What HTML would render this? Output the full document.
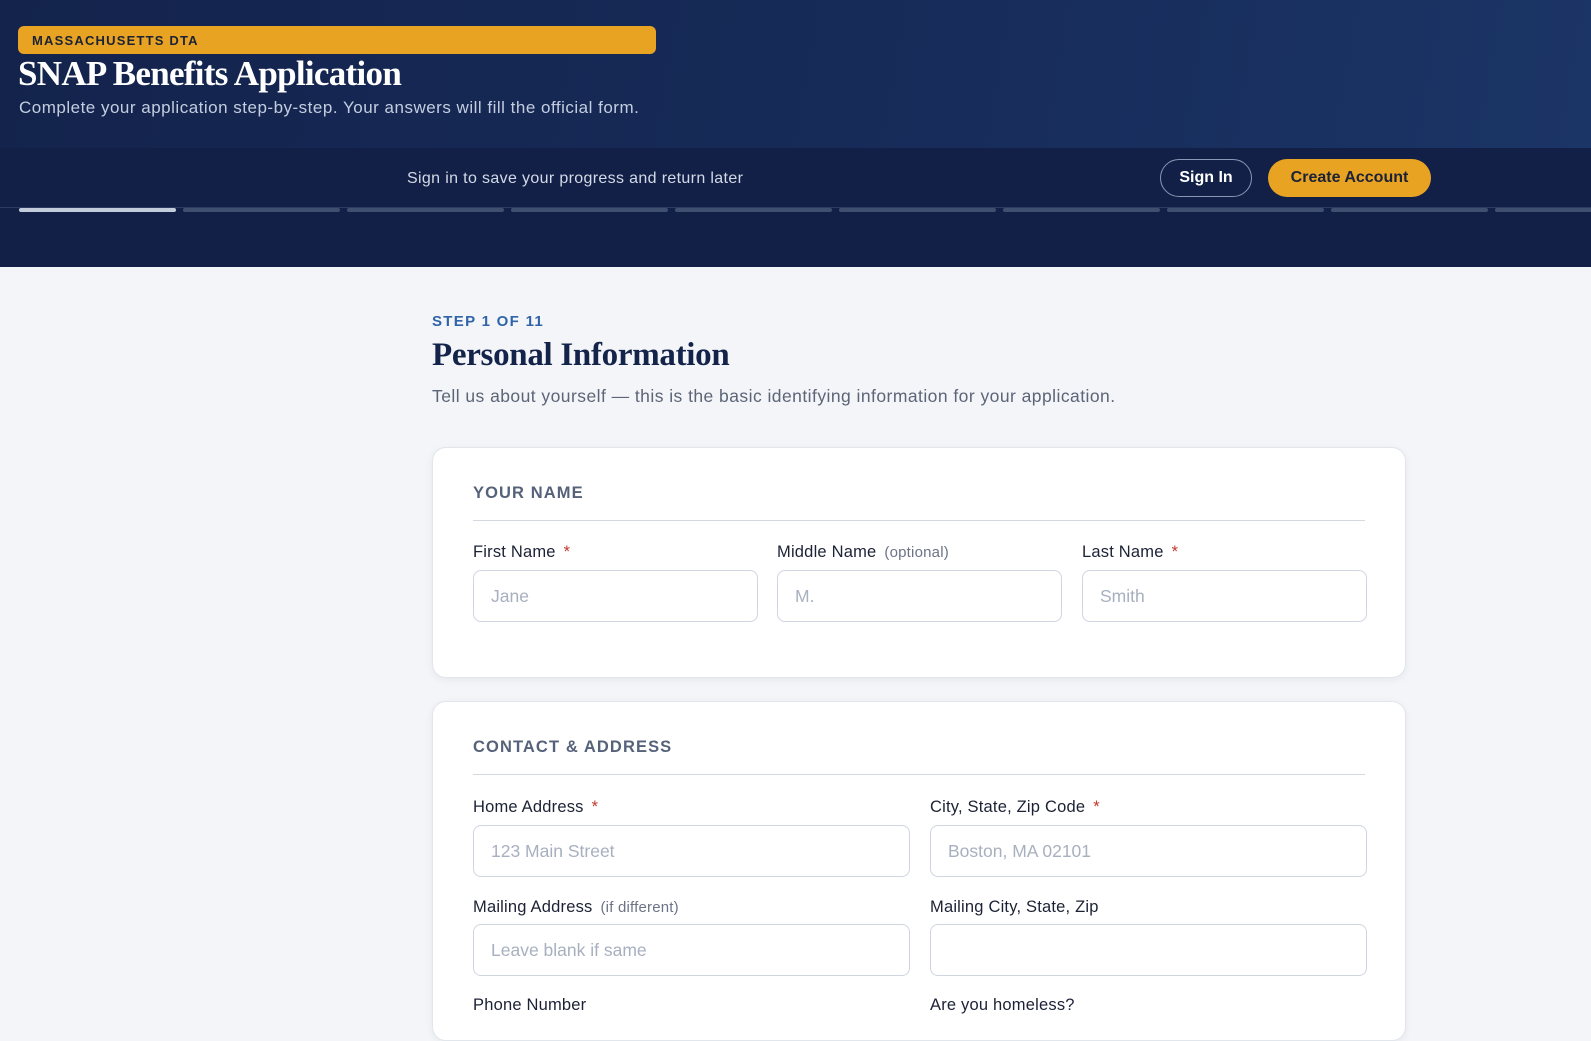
<!DOCTYPE html>
<html><head><meta charset="utf-8"><style>
*{box-sizing:border-box;margin:0;padding:0}
body{width:1591px;height:1010px;overflow:hidden;background:#f4f5f8;font-family:"Liberation Sans",sans-serif;position:relative}
.top{position:absolute;left:0;top:0;width:1591px;height:148px;background:linear-gradient(100deg,#13234c 0%,#172c5a 60%,#1b3566 100%)}
.badge{position:absolute;left:18px;top:26px;width:638px;height:28px;background:#e8a323;border-radius:6px;font-size:13px;letter-spacing:1.2px;color:#1c2235;padding:7px 0 0 14px;font-weight:bold}
h1{position:absolute;left:18px;top:54px;font-family:"Liberation Serif",serif;font-size:35px;color:#fff;letter-spacing:-0.7px;font-weight:bold}
.sub{position:absolute;left:19px;top:98px;font-size:17px;color:#c4cde0;letter-spacing:0.5px}
.bar{position:absolute;left:0;top:148px;width:1591px;height:119px;background:#122048}
.save{position:absolute;left:407px;top:170px;font-size:16px;color:#d3d9e6;letter-spacing:0.35px}
.btn1{position:absolute;left:1160px;top:159px;width:92px;height:38px;border:1px solid #8a96b3;border-radius:19px;color:#fff;font-weight:bold;font-size:16px;text-align:center;line-height:36px}
.btn2{position:absolute;left:1268px;top:159px;width:163px;height:38px;background:#e8a323;border-radius:19px;color:#1c2235;font-weight:bold;font-size:16px;text-align:center;line-height:38px}
.seg{position:absolute;top:208px;height:4px;width:157px;border-radius:2px;background:#3f4f70}
.line0{position:absolute;left:0;top:207px;width:1591px;height:1px;background:#2a3a60}
.step{position:absolute;left:432px;top:313px;font-size:15px;letter-spacing:1.3px;color:#2f64a8;font-weight:bold}
h2{position:absolute;left:432px;top:337px;font-family:"Liberation Serif",serif;font-size:33px;color:#14234a;letter-spacing:-0.3px;font-weight:bold}
.desc{position:absolute;left:432px;top:386px;font-size:17.5px;color:#5b6577;letter-spacing:0.45px}
.card{position:absolute;left:432px;width:974px;background:#fff;border:1px solid #e1e5ec;border-radius:14px;box-shadow:0 2px 8px rgba(20,35,75,.06)}
.sh{position:absolute;left:40px;font-size:16.5px;letter-spacing:1.1px;color:#56627a;font-weight:bold}
.hr{position:absolute;left:40px;right:40px;height:1px;background:#d4d9e1}
.lab{position:absolute;font-size:16.5px;color:#1c2235;letter-spacing:0.2px}
.lab i{font-style:normal;color:#c0392b;margin-left:8px}
.lab span{color:#6b7386;font-size:15px;margin-left:8px}
.inp{position:absolute;height:52px;border:1px solid #cfd5de;border-radius:8px;font-size:17.5px;color:#a7b0bf;padding:15px 0 0 17px;background:#fff}
</style></head><body>
<div class="top">
<div class="badge">MASSACHUSETTS DTA</div>
<h1>SNAP Benefits Application</h1>
<div class="sub">Complete your application step-by-step. Your answers will fill the official form.</div>
</div>
<div class="bar"></div>
<div class="save">Sign in to save your progress and return later</div>
<div class="btn1">Sign In</div>
<div class="btn2">Create Account</div>
<div class="line0"></div>
<div class="seg" style="left:19px;background:#c3ccda"></div>
<div class="seg" style="left:183px"></div>
<div class="seg" style="left:347px"></div>
<div class="seg" style="left:511px"></div>
<div class="seg" style="left:675px"></div>
<div class="seg" style="left:839px"></div>
<div class="seg" style="left:1003px"></div>
<div class="seg" style="left:1167px"></div>
<div class="seg" style="left:1331px"></div>
<div class="seg" style="left:1495px"></div>

<div class="step">STEP 1 OF 11</div>
<h2>Personal Information</h2>
<div class="desc">Tell us about yourself — this is the basic identifying information for your application.</div>

<div class="card" style="top:447px;height:231px">
<div class="sh" style="top:36px">YOUR NAME</div>
<div class="hr" style="top:72px"></div>
<div class="lab" style="left:40px;top:95px">First Name<i>*</i></div>
<div class="lab" style="left:344px;top:95px">Middle Name<span>(optional)</span></div>
<div class="lab" style="left:649px;top:95px">Last Name<i>*</i></div>
<div class="inp" style="left:40px;top:122px;width:285px">Jane</div>
<div class="inp" style="left:344px;top:122px;width:285px">M.</div>
<div class="inp" style="left:649px;top:122px;width:285px">Smith</div>
</div>

<div class="card" style="top:701px;height:340px">
<div class="sh" style="top:36px">CONTACT &amp; ADDRESS</div>
<div class="hr" style="top:72px"></div>
<div class="lab" style="left:40px;top:96px">Home Address<i>*</i></div>
<div class="lab" style="left:497px;top:96px">City, State, Zip Code<i>*</i></div>
<div class="inp" style="left:40px;top:123px;width:437px">123 Main Street</div>
<div class="inp" style="left:497px;top:123px;width:437px">Boston, MA 02101</div>
<div class="lab" style="left:40px;top:196px">Mailing Address<span>(if different)</span></div>
<div class="lab" style="left:497px;top:196px">Mailing City, State, Zip</div>
<div class="inp" style="left:40px;top:222px;width:437px">Leave blank if same</div>
<div class="inp" style="left:497px;top:222px;width:437px"></div>
<div class="lab" style="left:40px;top:294px">Phone Number</div>
<div class="lab" style="left:497px;top:294px">Are you homeless?</div>
</div>
</body></html>
